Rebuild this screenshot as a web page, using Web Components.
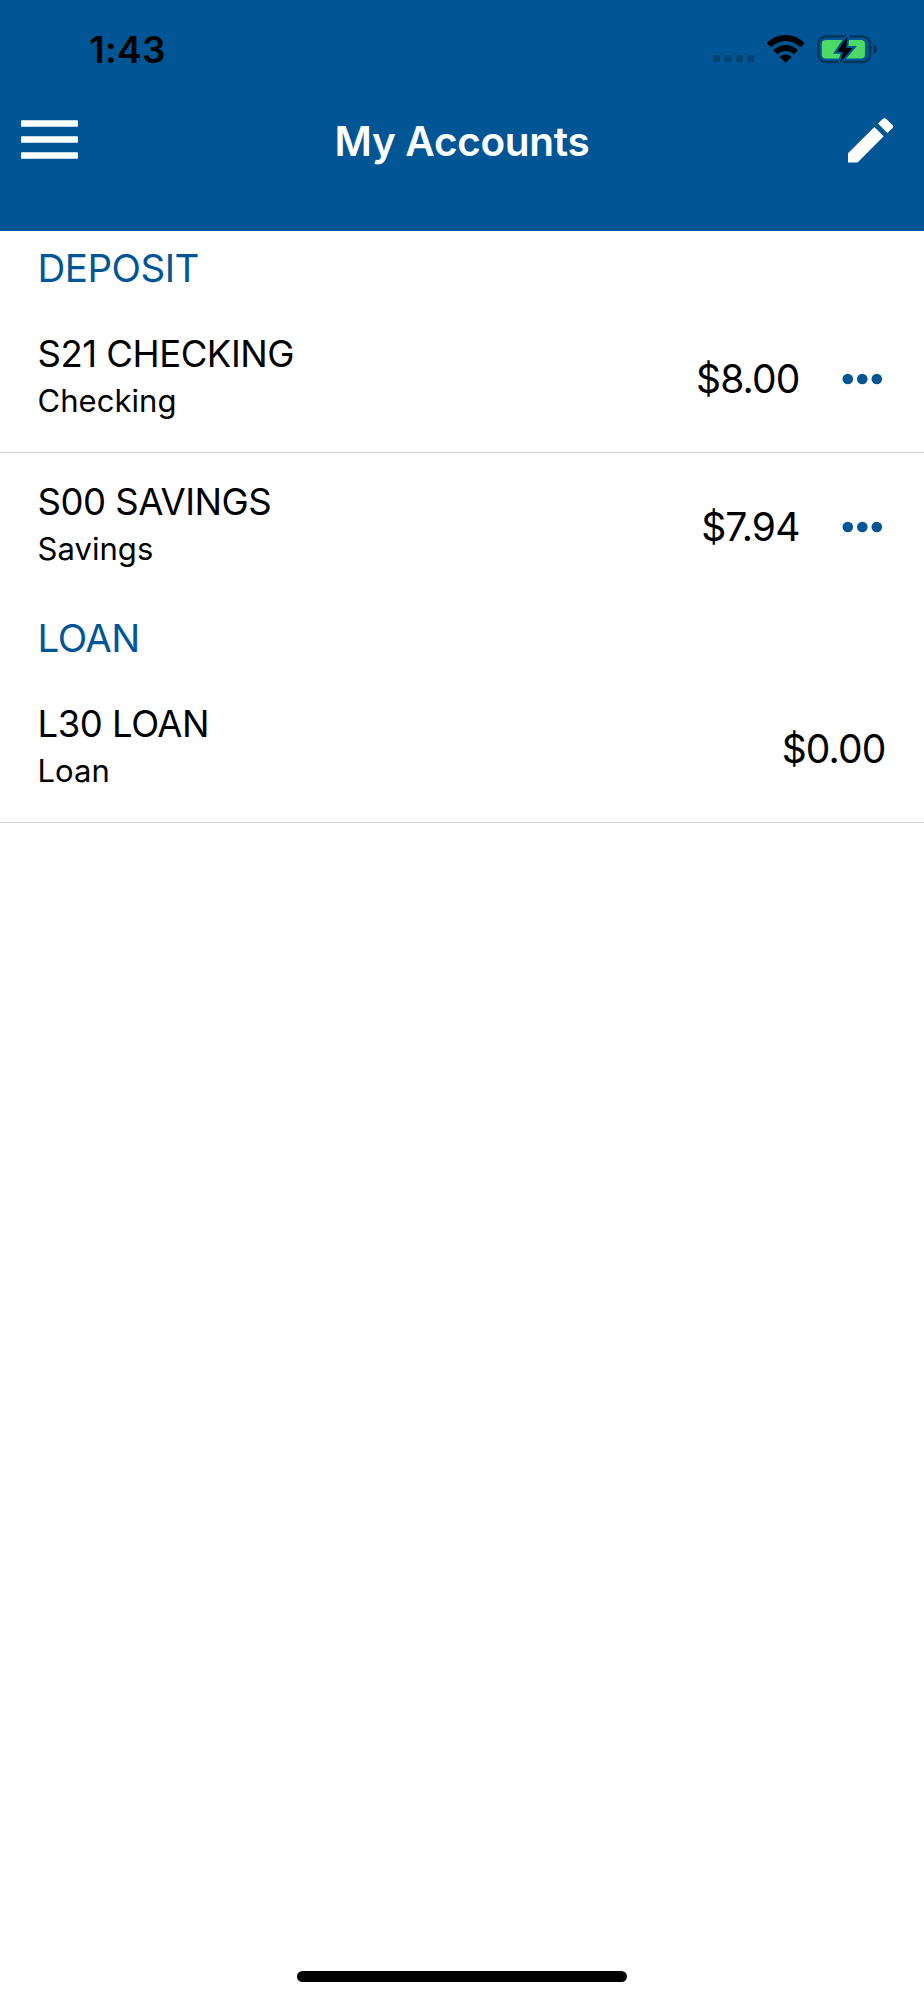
<!DOCTYPE html>
<html lang="en">
<head>
<meta charset="utf-8">
<title>My Accounts</title>
<style>
    html, body {
        margin: 0;
        background: #fff;
        font-family: Inter, "Liberation Sans", sans-serif;
        --brand: #005695;
    }
</style>
</head>
<body>
<accounts-screen>
    <status-bar slot="top" time="1:43"></status-bar>
    <nav-bar slot="top">My Accounts</nav-bar>

    <account-group label="DEPOSIT">
        <account-row name="S21 CHECKING" kind="Checking" amount="$8.00" menu></account-row>
        <account-row name="S00 SAVINGS" kind="Savings" amount="$7.94" menu></account-row>
    </account-group>
    <account-group label="LOAN">
        <account-row name="L30 LOAN" kind="Loan" amount="$0.00"></account-row>
    </account-group>
</accounts-screen>

<script>
// Shared setup: every component clones its markup into an open shadow root
class BaseElement extends HTMLElement {
    constructor(html) {
        super();
        const template = document.createElement('template');
        template.innerHTML = html;
        this.attachShadow({ mode: 'open' });
        this.shadowRoot.appendChild(template.content.cloneNode(true));
    }

    // Copy an attribute's value into an element of the shadow root
    fill(selector, attribute) {
        this.shadowRoot.querySelector(selector).textContent = this.getAttribute(attribute);
    }
}

// Whole screen: blue header, list of groups, home indicator
class AccountsScreen extends BaseElement {
    constructor() {
        super(`
        <style>
            :host {
                display: flex;
                flex-direction: column;
                width: 924px;
                height: 2000px;
            }
            header {
                height: 231px;
                background: var(--brand);
            }
            main { flex: 1; }
            footer {
                display: flex;
                justify-content: center;
                padding-bottom: 18px;
            }
            .home {
                width: 330px;
                height: 11px;
                border-radius: 6px;
                background: #000;
            }
        </style>
        <header><slot name="top"></slot></header>
        <main><slot></slot></main>
        <footer><div class="home"></div></footer>
        `);
    }
}

class StatusBar extends BaseElement {
    constructor() {
        super(`
        <style>
            :host {
                display: flex;
                justify-content: space-between;
                height: 98px;
                box-sizing: border-box;
                padding: 0 44px 0 89px;
            }
            .time {
                padding-top: 28px;
                font-size: 37px;
                line-height: 44px;
                font-weight: 600;
                letter-spacing: .3px;
                color: #000;
            }
            svg { display: block; }
        </style>
        <span class="time"></span>
        <svg width="170" height="98" viewBox="710 0 170 98">
            <g opacity=".22">
                <rect x="713" y="55" width="7.2" height="7.6" rx="2"/>
                <rect x="724.4" y="55" width="7.2" height="7.6" rx="2"/>
                <rect x="735.8" y="55" width="7.2" height="7.6" rx="2"/>
                <rect x="747.2" y="55" width="7.2" height="7.6" rx="2"/>
            </g>
            <path d="M785.7 35C778.5 35 772 37.9 767.5 42.5Q766.9 43.2 767.5 43.9L770.5 46.8Q771.2 47.3 771.9 46.7C775.5 43.2 780.3 41.1 785.7 41.1S795.9 43.2 799.5 46.7Q800.2 47.3 800.9 46.8L803.9 43.9Q804.5 43.2 803.9 42.5C799.4 37.9 792.9 35 785.7 35Z"/>
            <path d="M785.7 44.9C781.2 44.9 777 46.6 773.9 49.5Q773.3 50.2 773.9 50.9L777 53.8Q777.7 54.3 778.4 53.7C780.3 52 782.9 51 785.7 51S791.1 52 793 53.7Q793.7 54.3 794.4 53.8L797.5 50.9Q798.1 50.2 797.5 49.5C794.4 46.6 790.2 44.9 785.7 44.9Z"/>
            <path d="M785.7 54.4C783.6 54.4 781.7 55.2 780.3 56.4Q779.8 57 780.3 57.6L785 62Q785.7 62.6 786.4 62L791.1 57.6Q791.6 57 791.1 56.4C789.7 55.2 787.8 54.4 785.7 54.4Z"/>
            <rect x="818.4" y="36.4" width="51.8" height="25.6" rx="7.5" fill="none" stroke="#000" stroke-opacity=".4" stroke-width="2.4"/>
            <path d="M873.6 44.2C876 45.3 877 47.2 877 49.2S876 53.1 873.6 54.2Z" opacity=".45"/>
            <rect x="821.8" y="40" width="43.2" height="18.5" rx="4" fill="#4cd964"/>
            <path d="M847.3 36.5L836.8 51.8H843.2L840 62.6L852.6 48H846.2Z" fill="#000" stroke="#005695" stroke-width="4" stroke-linejoin="miter"/>
            <path d="M847.3 36.8L836.8 51.8H843.2L840 62.6L852.6 48H846.2Z"/>
        </svg>
        `);
    }

    connectedCallback() {
        this.fill('.time', 'time');
    }
}

class NavBar extends BaseElement {
    constructor() {
        super(`
        <style>
            :host {
                display: grid;
                grid-template-columns: 57px 1fr 45px;
                align-items: center;
                height: 84px;
                padding: 0 31px 0 21px;
                color: #fff;
            }
            h1 {
                margin: 0;
                padding: 3px 2px 0 0;
                font-size: 40.5px;
                line-height: 50px;
                font-weight: 600;
                letter-spacing: -.3px;
                text-align: center;
            }
            svg { display: block; fill: #fff; }
        </style>
        <svg width="57" height="40" viewBox="0 0 57 40">
            <rect y=".2" width="57" height="6.6" rx="1"/>
            <rect y="16.2" width="57" height="6.6" rx="1"/>
            <rect y="32.2" width="57" height="6.6" rx="1"/>
        </svg>
        <h1><slot></slot></h1>
        <svg width="45" height="45" viewBox="0 0 45 45">
            <path d="M0 35.3L26.4 8.9L35.7 18.2L9.6 44.4H0Z"/>
            <path d="M30 5.6L34.4 1.2Q36.5-.9 38.6 1.2L44.2 6.8Q46 8.7 44.2 10.6L39.3 15Z"/>
        </svg>
        `);
    }
}

// Heading plus its rows
class AccountGroup extends BaseElement {
    constructor() {
        super(`
        <style>
            :host { display: block; }
            h2 {
                box-sizing: border-box;
                height: 74px;
                margin: 0;
                padding: 14px 37.5px 0;
                font-size: 38.5px;
                line-height: 46px;
                font-weight: 400;
                letter-spacing: -.5px;
                color: var(--brand);
            }
        </style>
        <h2></h2>
        <slot></slot>
        `);
    }

    connectedCallback() {
        this.fill('h2', 'label');
    }
}

class AccountRow extends BaseElement {
    constructor() {
        super(`
        <style>
            :host {
                display: flex;
                align-items: center;
                justify-content: space-between;
                box-sizing: border-box;
                height: 148px;
                padding: 0 38.5px 0 37.5px;
                border-bottom: 1px solid #d2d2d2;
                color: #000;
            }
            /* a group closed by another group has no rule under it */
            :host([menu]:last-child) { border-bottom-color: transparent; }
            .text { padding-bottom: 3px; }
            .name {
                font-size: 36.5px;
                line-height: 48px;
                letter-spacing: -.48px;
            }
            .kind {
                font-size: 31px;
                line-height: 46px;
                letter-spacing: .05px;
            }
            .side {
                display: flex;
                align-items: center;
                padding-top: 1px;
            }
            .amount {
                font-size: 39px;
                line-height: 48px;
                letter-spacing: -.85px;
            }
            svg {
                display: none;
                margin: 0 2.5px 1px 42.5px;
                fill: var(--brand);
            }
            :host([menu]) svg { display: block; }
        </style>
        <div class="text">
            <div class="name"></div>
            <div class="kind"></div>
        </div>
        <div class="side">
            <span class="amount"></span>
            <svg width="41" height="12" viewBox="0 0 41 12">
                <circle cx="5.8" cy="6" r="5.3"/>
                <circle cx="20.3" cy="6" r="5.3"/>
                <circle cx="34.8" cy="6" r="5.3"/>
            </svg>
        </div>
        `);
    }

    connectedCallback() {
        this.fill('.name', 'name');
        this.fill('.kind', 'kind');
        this.fill('.amount', 'amount');
    }
}

customElements.define('accounts-screen', AccountsScreen);
customElements.define('status-bar', StatusBar);
customElements.define('nav-bar', NavBar);
customElements.define('account-group', AccountGroup);
customElements.define('account-row', AccountRow);
</script>
</body>
</html>
